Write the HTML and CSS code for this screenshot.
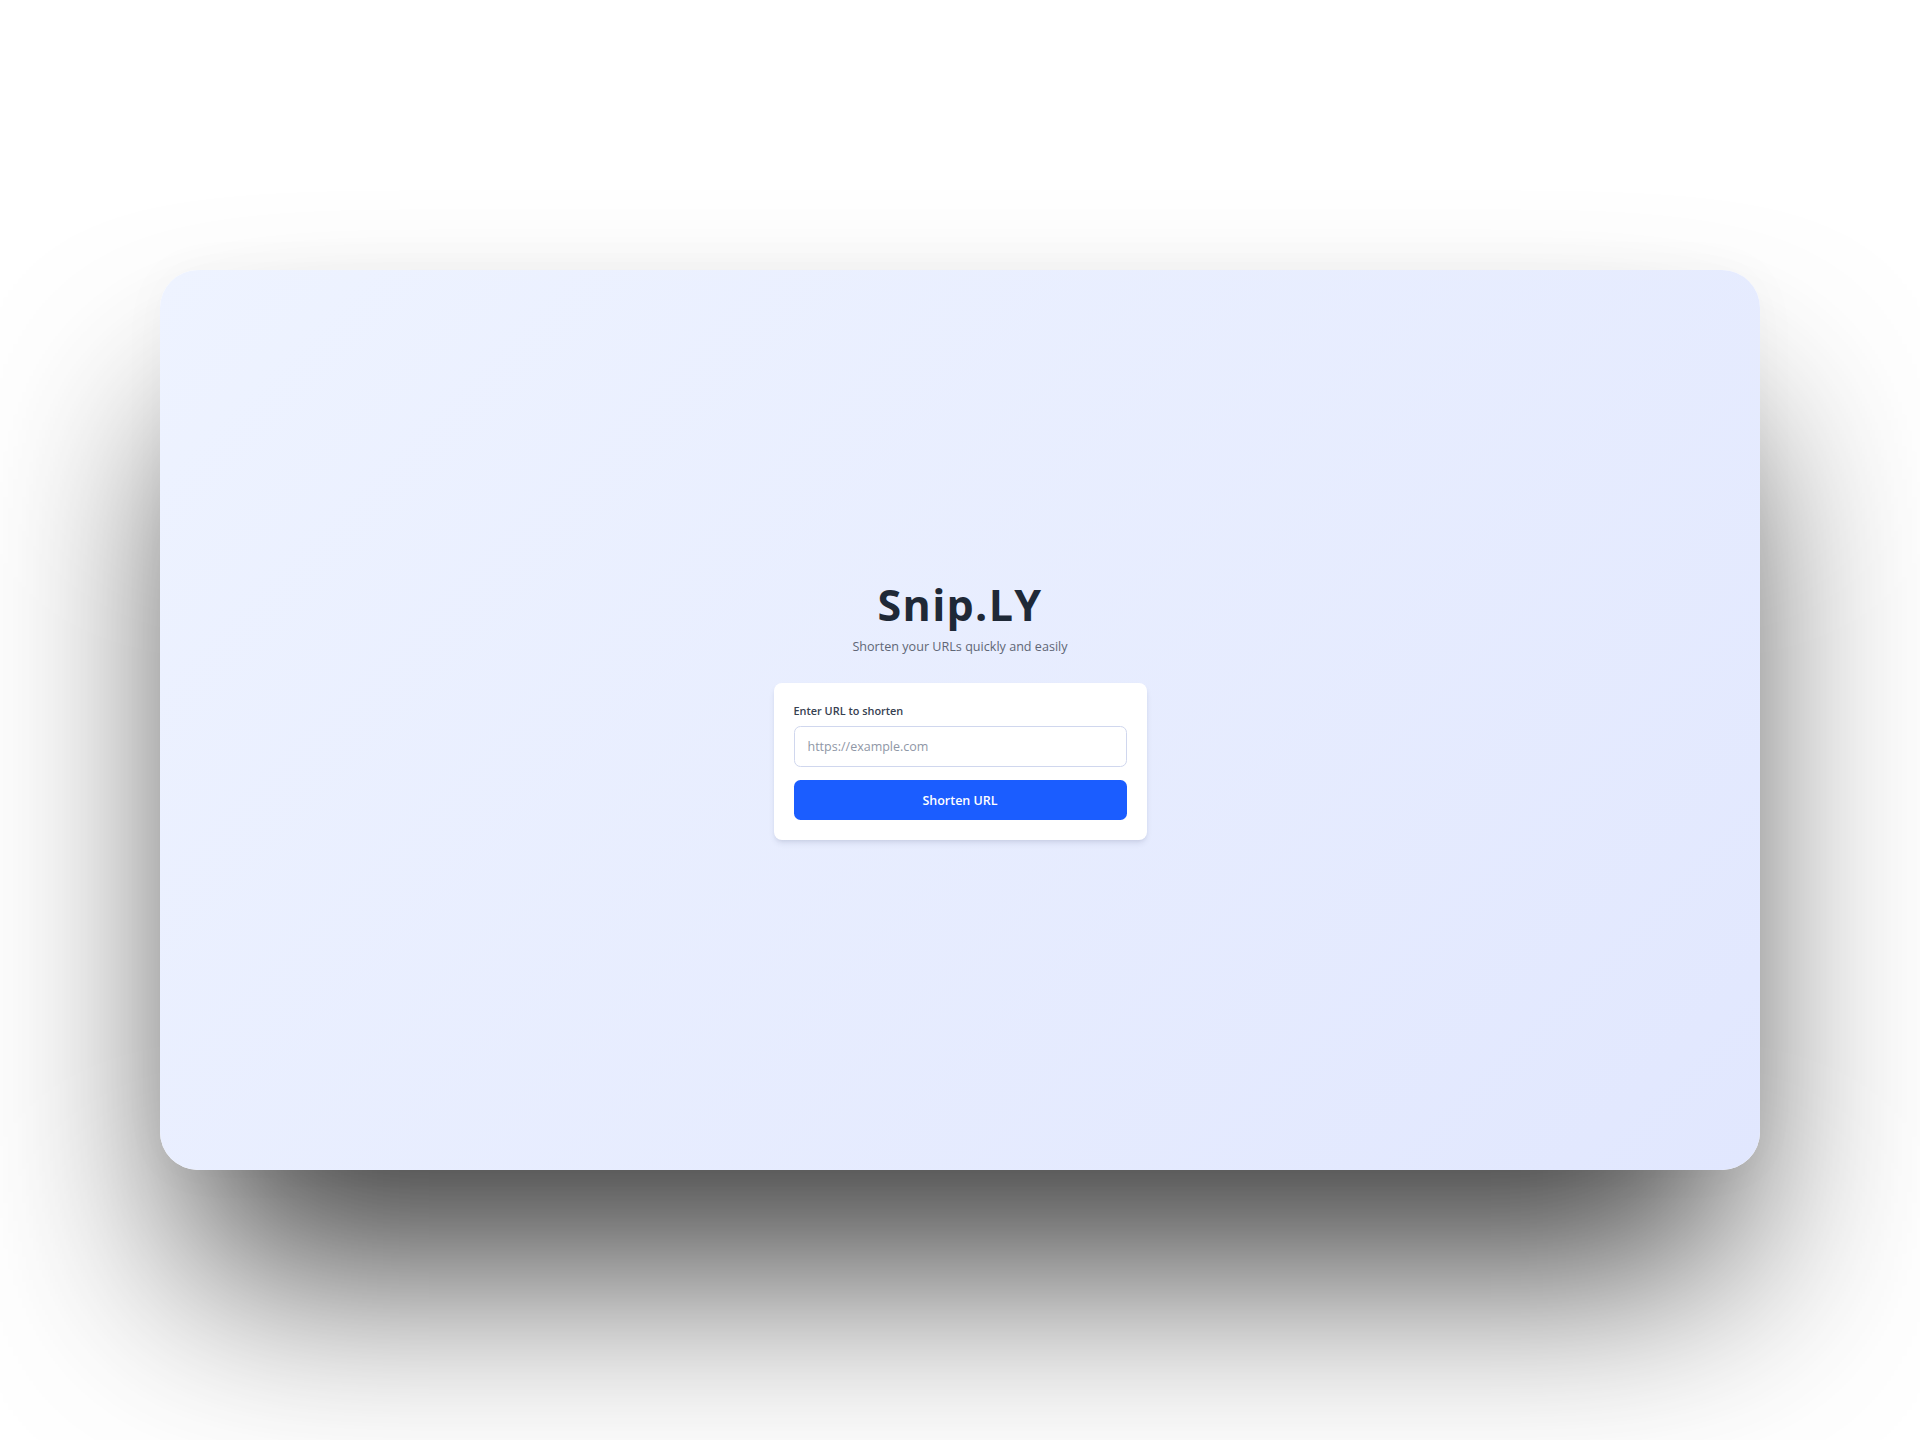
FILE: index.html
```html
<!DOCTYPE html>
<html lang="en">
<head>
<meta charset="utf-8">
<title>Snip.LY</title>
<link rel="stylesheet" href="styles.css">
</head>
<body>
  <div class="frame">
    <main class="screen">
      <header class="brand">
        <h1 class="brand-title">Snip.LY</h1>
        <p class="brand-sub">Shorten your URLs quickly and easily</p>
      </header>
      <form class="card" onsubmit="return false">
        <label class="field-label" for="url">Enter URL to shorten</label>
        <input class="field-input" id="url" type="text" placeholder="https://example.com">
        <button class="btn-primary" type="submit">Shorten URL</button>
      </form>
    </main>
  </div>
</body>
</html>
```

FILE: styles.css
```css
html, body {
  margin: 0;
  padding: 0;
  background: #ffffff;
}

body {
  width: 1920px;
  height: 1440px;
  overflow: hidden;
  font-family: "Open Sans", "Noto Sans", "Liberation Sans", sans-serif;
}

.frame {
  padding-top: 270px;
  display: flex;
  justify-content: center;
}

.screen {
  width: 1600px;
  height: 900px;
  box-sizing: border-box;
  border-radius: 38px;
  background: linear-gradient(135deg, #eef3ff 0%, #e1e7fe 100%);
  box-shadow:
    0 130px 200px -30px rgba(0, 0, 0, 0.75),
    0 0 50px rgba(0, 0, 0, 0.03);
  display: flex;
  flex-direction: column;
  align-items: center;
  justify-content: center;
  padding-bottom: 15px;
}

.brand {
  text-align: center;
  margin-bottom: 27px;
}

.brand-title {
  margin: 0 0 14px;
  font-size: 43px;
  line-height: 40px;
  font-weight: 700;
  letter-spacing: 1.3px;
  color: #1f2937;
}

.brand-sub {
  margin: 0;
  font-size: 12.6px;
  line-height: 16.7px;
  color: #5f6675;
}

.card {
  width: 373px;
  box-sizing: border-box;
  padding: 20px;
  background: #ffffff;
  border-radius: 8px;
  box-shadow:
    0 4px 6px -1px rgba(30, 40, 80, 0.10),
    0 2px 4px -2px rgba(30, 40, 80, 0.10);
  display: flex;
  flex-direction: column;
}

.field-label {
  font-size: 10.9px;
  line-height: 16.7px;
  font-weight: 600;
  color: #374151;
  margin-bottom: 7px;
}

.field-input {
  height: 40.5px;
  box-sizing: border-box;
  border: 1px solid #d0d7ee;
  border-radius: 6.5px;
  padding: 0 13px;
  font-family: inherit;
  font-size: 12.5px;
  color: #1f2937;
  background: #ffffff;
  outline: none;
}

.field-input::placeholder {
  color: #8f97a6;
}

.btn-primary {
  margin-top: 13.5px;
  height: 40px;
  border: none;
  border-radius: 6.5px;
  background: #1b5dff;
  color: #ffffff;
  font-family: inherit;
  font-size: 12.5px;
  font-weight: 600;
  cursor: pointer;
}
```
